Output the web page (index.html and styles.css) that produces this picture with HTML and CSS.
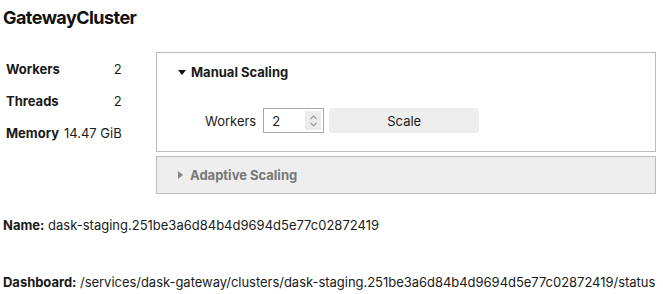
FILE: index.html
```html
<!DOCTYPE html>
<html>
<head>
<meta charset="utf-8">
<link rel="stylesheet" href="styles.css">
</head>
<body>
<h2 class="title">GatewayCluster</h2>
<div class="main">
  <div class="stats">
    <div class="stat-grid">
      <span class="lbl">Workers</span><span class="val">2</span>
      <span class="lbl">Threads</span><span class="val">2</span>
      <span class="lbl">Memory</span><span class="val">14.47 GiB</span>
    </div>
  </div>
  <div class="panel">
    <div class="box manual">
      <div class="head"><span class="tri down"></span>Manual Scaling</div>
      <div class="scale-row">
        <span class="wlabel">Workers</span>
        <div class="num">
          <span class="num-val">2</span>
          <span class="spin">
            <svg width="9" height="14" viewBox="0 0 9 14"><path d="M1.5 5 L4.5 2 L7.5 5" fill="none" stroke="#9a9aa0" stroke-width="1.1"/><path d="M1.5 9 L4.5 12 L7.5 9" fill="none" stroke="#9a9aa0" stroke-width="1.1"/></svg>
          </span>
        </div>
        <button class="scale-btn">Scale</button>
      </div>
    </div>
    <div class="box adaptive">
      <div class="head"><span class="tri right"></span>Adaptive Scaling</div>
    </div>
  </div>
</div>
<p class="info name"><b>Name:</b> dask-staging.251be3a6d84b4d9694d5e77c02872419</p>
<p class="info dash"><b>Dashboard:</b> /services/dask-gateway/clusters/dask-staging.251be3a6d84b4d9694d5e77c02872419/status</p>
</body>
</html>
```
FILE: styles.css
```css
html, body { background: #fff; }
body {
  margin: 0;
  padding: 0 7px 0 3px;
  font-family: Inter, "Noto Sans", sans-serif;
  font-size: 13px;
  color: #1a1a1a;
}
.title {
  margin: 6px 0 0;
  font-size: 18px;
  line-height: 24px;
  font-weight: 700;
  letter-spacing: -0.55px;
  color: #111;
}
.main {
  display: flex;
  margin-top: 22px;
}
.stats {
  width: 153px;
  flex: none;
  padding-left: 3px;
  box-sizing: border-box;
}
.stat-grid {
  display: inline-grid;
  grid-template-columns: auto auto;
  grid-auto-rows: 32px;
  column-gap: 4px;
  line-height: 32px;
  margin-top: 1px;
}
.lbl { font-weight: 700; }
.val { text-align: right; }
.panel {
  width: 500px;
  flex: none;
  display: flex;
  flex-direction: column;
  gap: 4px;
}
.box {
  border: 1px solid #bcbcbc;
}
.head {
  font-weight: 700;
  line-height: 18px;
  display: flex;
  align-items: center;
}
.manual {
  padding: 10px 21px 17px;
  height: 100px;
  box-sizing: border-box;
}
.adaptive {
  background: #eeeeee;
  padding: 9px 21px;
  height: 38px;
  box-sizing: border-box;
}
.adaptive .head { color: #777; }
.tri {
  display: inline-block;
  width: 0;
  height: 0;
  margin-right: 5px;
}
.tri.down {
  border-left: 4px solid transparent;
  border-right: 4px solid transparent;
  border-top: 5px solid #111;
}
.tri.right {
  border-top: 4px solid transparent;
  border-bottom: 4px solid transparent;
  border-left: 5px solid #888;
  margin-right: 7px;
}
.scale-row {
  display: flex;
  align-items: center;
  margin-top: 27px;
  margin-left: 27px;
  height: 25px;
}
.wlabel { margin-right: 7px; }
.num {
  width: 61px;
  height: 25px;
  box-sizing: border-box;
  border: 1px solid #a9a9a9;
  display: flex;
  align-items: center;
  justify-content: space-between;
  padding: 0 2px 0 8px;
  background: #fff;
}
.spin {
  width: 16px;
  height: 19px;
  background: #ececef;
  display: flex;
  align-items: center;
  justify-content: center;
}
.scale-btn {
  margin-left: 5px;
  width: 150px;
  height: 25px;
  border: none;
  border-radius: 3px;
  background: #eeeeee;
  font-family: inherit;
  font-size: 13px;
  color: #1a1a1a;
  padding: 0;
}
.info {
  margin: 0;
  line-height: 18px;
  white-space: nowrap;
}
.name { margin-top: 22px; }
.dash { margin-top: 39px; letter-spacing: -0.03px; }
```
